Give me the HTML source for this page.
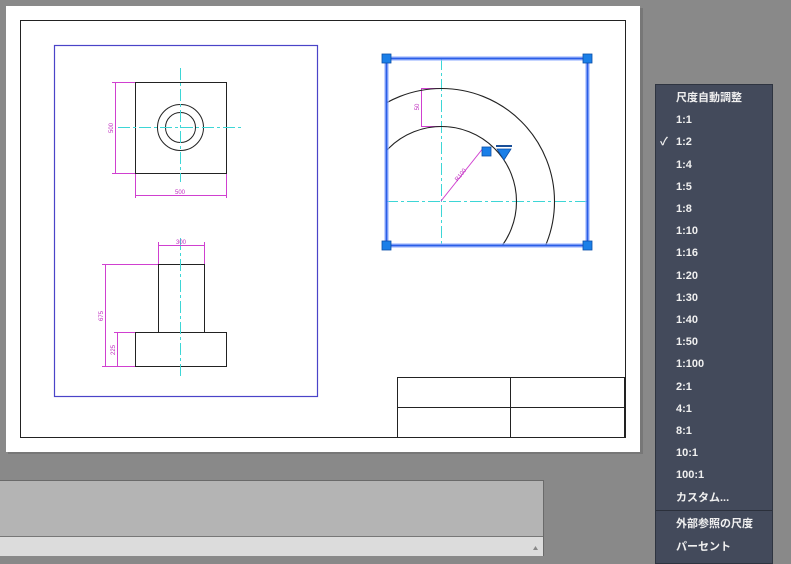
<!DOCTYPE html>
<html><head><meta charset="utf-8"><style>
html,body{margin:0;padding:0;width:791px;height:556px;overflow:hidden;background:#898989;font-family:"Liberation Sans","Noto Sans CJK JP",sans-serif}
#menu{position:absolute;left:655px;top:84px;width:118px;height:480px;background:#434a5b;border:1px solid #2e3440;box-sizing:border-box}
#menu div{position:absolute;left:20px;color:#f0f0f0;font-size:11px;font-weight:bold;line-height:14px;white-space:nowrap}
#menu .sep{left:0;width:116px;height:1px;background:#2b303b}
</style></head><body>
<svg width="791" height="556" style="position:absolute;left:0;top:0">
<rect x="6" y="6" width="634" height="446" fill="#fff"/>
<rect x="640" y="8" width="3" height="446" fill="#777"/>
<rect x="8" y="452" width="635" height="2" fill="#777"/>
<rect x="20.5" y="20.5" width="605" height="417" fill="none" stroke="#222" stroke-width="1"/>
<rect x="54.5" y="45.5" width="263" height="351" fill="none" stroke="#4a44c8" stroke-width="1.2"/>
<g fill="none" stroke="#222" stroke-width="1">
<rect x="135.5" y="82.5" width="91" height="91"/>
<circle cx="180.5" cy="127.5" r="23"/>
<circle cx="180.5" cy="127.5" r="15"/>
<rect x="158.5" y="264.5" width="46" height="68"/>
<rect x="135.5" y="332.5" width="91" height="34"/>
<rect x="397.5" y="377.5" width="227" height="60"/>
<line x1="510.5" y1="377" x2="510.5" y2="437"/>
<line x1="397" y1="407.5" x2="624" y2="407.5"/>
</g>
<g stroke="#3dd6d6" stroke-width="1" stroke-dasharray="12,3,3,3" fill="none">
<line x1="180.5" y1="68" x2="180.5" y2="182"/>
<line x1="118" y1="127.5" x2="242" y2="127.5"/>
<line x1="180.5" y1="238" x2="180.5" y2="378"/>
<line x1="441.5" y1="58" x2="441.5" y2="245"/>
<line x1="386" y1="201.5" x2="587" y2="201.5"/>
</g>
<g stroke="#d040d0" stroke-width="1" fill="none">
<line x1="115.5" y1="82" x2="115.5" y2="173"/><line x1="112" y1="82.5" x2="135" y2="82.5"/><line x1="112" y1="173.5" x2="135" y2="173.5"/>
<line x1="135" y1="195.5" x2="226" y2="195.5"/><line x1="135.5" y1="174" x2="135.5" y2="198"/><line x1="226.5" y1="174" x2="226.5" y2="198"/>
<line x1="158" y1="245.5" x2="204" y2="245.5"/><line x1="158.5" y1="242" x2="158.5" y2="264"/><line x1="204.5" y1="242" x2="204.5" y2="264"/>
<line x1="105.5" y1="264" x2="105.5" y2="366"/><line x1="102" y1="264.5" x2="158" y2="264.5"/><line x1="102" y1="366.5" x2="135" y2="366.5"/>
<line x1="117.5" y1="332" x2="117.5" y2="366"/><line x1="114" y1="332.5" x2="135" y2="332.5"/>
<line x1="421.5" y1="88" x2="421.5" y2="126"/><line x1="421" y1="88.5" x2="441" y2="88.5"/><line x1="421" y1="126.5" x2="441" y2="126.5"/>
<line x1="441" y1="201" x2="484" y2="147"/>
</g>
<g fill="#c030c0" font-size="6" font-family="Liberation Sans">
<text x="180" y="194" text-anchor="middle">500</text>
<text x="181" y="244" text-anchor="middle">300</text>
<text transform="translate(113,128) rotate(-90)" text-anchor="middle">500</text>
<text transform="translate(103,316) rotate(-90)" text-anchor="middle">675</text>
<text transform="translate(115,350) rotate(-90)" text-anchor="middle">225</text>
<text transform="translate(419,107) rotate(-90)" text-anchor="middle">50</text>
<text transform="translate(462,176) rotate(-51)" text-anchor="middle">R100</text>
</g>
<defs><clipPath id="c"><rect x="386" y="58" width="201" height="187"/></clipPath></defs>
<g clip-path="url(#c)" fill="none" stroke="#222" stroke-width="1.1">
<circle cx="441.5" cy="201.5" r="75"/>
<circle cx="441.5" cy="201.5" r="113"/>
</g>
<rect x="386.5" y="58.5" width="201" height="187" fill="none" stroke="#9fb8ff" stroke-width="5" opacity="0.6"/>
<rect x="386.5" y="58.5" width="201" height="187" fill="none" stroke="#2a5ee8" stroke-width="2"/>
<g fill="#1a7fe8" stroke="#0b4fa8" stroke-width="0.8">
<rect x="382" y="54" width="9" height="9"/><rect x="583" y="54" width="9" height="9"/>
<rect x="382" y="241" width="9" height="9"/><rect x="583" y="241" width="9" height="9"/>
<rect x="482" y="147" width="9" height="9"/>
<path d="M497 149 L511 149 L504 160 Z"/>
</g>
<rect x="496" y="145" width="16" height="2" fill="#1a4f98"/>
<rect x="0" y="481" width="544" height="56" fill="#b4b4b4"/>
<rect x="0" y="480" width="544" height="1" fill="#6a6a6a"/>
<rect x="543" y="480" width="1" height="76" fill="#6a6a6a"/>
<rect x="0" y="537" width="543" height="19" fill="#dcdcdc"/>
<rect x="0" y="536" width="543" height="1" fill="#777"/>
<path d="M533 550 L538 550 L535.5 546 Z" fill="#888"/>
</svg>
<div id="menu">
<div style="top:6px">尺度自動調整</div>
<div style="top:28px">1:1</div>
<div style="top:50px;left:4px">✓</div><div style="top:50px">1:2</div>
<div style="top:73px">1:4</div>
<div style="top:95px">1:5</div>
<div style="top:117px">1:8</div>
<div style="top:139px">1:10</div>
<div style="top:161px">1:16</div>
<div style="top:184px">1:20</div>
<div style="top:206px">1:30</div>
<div style="top:228px">1:40</div>
<div style="top:250px">1:50</div>
<div style="top:272px">1:100</div>
<div style="top:295px">2:1</div>
<div style="top:317px">4:1</div>
<div style="top:339px">8:1</div>
<div style="top:361px">10:1</div>
<div style="top:383px">100:1</div>
<div style="top:406px">カスタム...</div>
<div class="sep" style="top:425px"></div>
<div style="top:432px">外部参照の尺度</div>
<div style="top:455px">パーセント</div>
</div>
</body></html>
